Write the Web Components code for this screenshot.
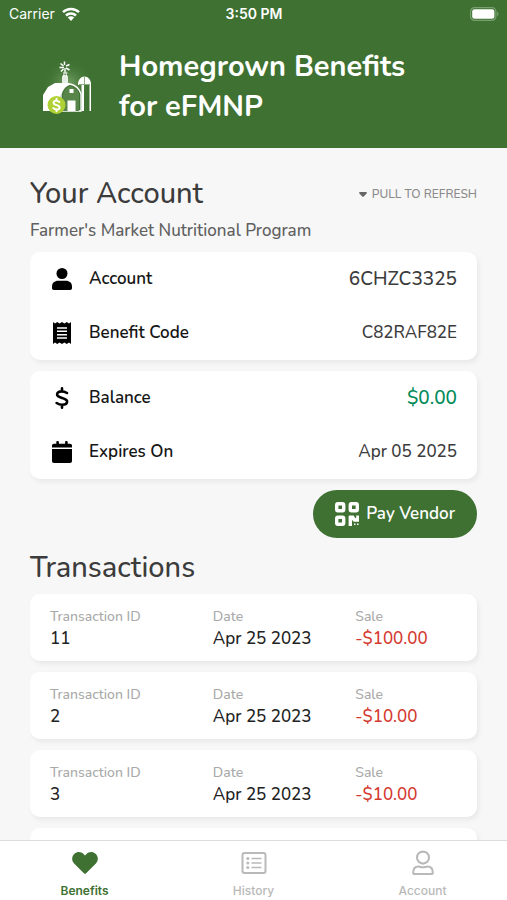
<!DOCTYPE html>
<html lang="en">
<head>
<meta charset="utf-8">
<meta name="viewport" content="width=device-width, initial-scale=1">
<title>Homegrown Benefits</title>
<style>
  :root {
    --green: #3e7132;
    --ink: #3c3c3c;
    --muted: #a9a9a9;
    --round: Nunito, Lato, "Noto Sans", sans-serif;
    --system: Inter, "Liberation Sans", sans-serif;
  }
  body { margin: 0; font-family: var(--round); background: #f7f7f7; }
</style>
</head>
<body>
<benefits-app></benefits-app>
<script>
const icons = {
  user: '<svg viewBox="0 0 20 22"><circle cx="10" cy="5.5" r="5.5"/><path d="M0 20v-1.500C0 15 2.700 12.800 6 12.800h8c3.300 0 6 2.200 6 5.700V20c0 1.200-.7 2-1.800 2H1.800C.7 22 0 21.200 0 20z"/></svg>',
  receipt: '<svg viewBox="0 0 20 22"><path fill-rule="evenodd" d="M1 0l2 1.600L5.200 0l2.400 1.600L10 0l2.400 1.600L14.800 0 17 1.600 19 0v22l-2-1.600-2.200 1.600-2.400-1.600L10 22l-2.400-1.600L5.200 22 3 20.400 1 22zM5 5.300v1.500h10V5.300zm0 3.300v1.500h10V8.600zm0 3.300v1.500h10v-1.500zm0 3.300v1.500h10v-1.500z"/></svg>',
  dollar: '<svg viewBox="0 0 20 22"><path fill="none" stroke="currentColor" stroke-width="2.600" stroke-linecap="round" stroke-linejoin="round" d="M10 1.300v3M10 17.700v3M15 6c-1.700-1-3.300-1.600-5.200-1.600C7 4.400 5.100 5.500 5.100 7.500c0 4.200 10 2.600 10 7 0 2-1.900 3.200-4.900 3.200-2.100 0-4-.7-5.600-1.700"/></svg>',
  calendar: '<svg viewBox="0 0 20 22"><path d="M0 6.500V4.700c0-1.200.8-2 2-2h2.300V1.200C4.300.5 4.800 0 5.600 0s1.300.5 1.300 1.200v1.500h6.200V1.200c0-.7.500-1.200 1.300-1.200s1.300.5 1.300 1.200v1.500H18c1.200 0 2 .8 2 2v1.800zM0 8h20v12c0 1.200-.8 2-2 2H2c-1.200 0-2-.8-2-2z"/></svg>',
  qr: '<svg viewBox="0 0 24 24"><g fill="none" stroke="currentColor" stroke-width="3.400" stroke-linejoin="round"><rect x="1.700" y="1.700" width="7" height="7" rx="1.200"/><rect x="15.300" y="1.700" width="7" height="7" rx="1.200"/><rect x="1.700" y="15.300" width="7" height="7" rx="1.200"/></g><path d="M13.600 14.600c0-.6.400-1 1-1h4l1.600 2.400h1v-2.400H24v6.200h-5.400L17 17.800V24h-3.400zM19 21.500h1.500V23H19zM22 21.500h1.500V23H22z"/></svg>',
  heart: '<svg viewBox="0 0 26 24"><path d="M23.500 2.800c-2.700-2.500-6.500-2.200-9 .2L13 4.600 11.500 3C9 .6 5.200.3 2.500 2.800c-3 2.700-3 7-.4 9.600l9.800 9.800c.6.700 1.600.7 2.200 0l9.800-9.800c2.600-2.600 2.600-6.900-.4-9.600z"/></svg>',
  list: '<svg viewBox="0 0 26 24"><g fill="none" stroke="currentColor" stroke-width="2"><rect x="1.500" y="2" width="23" height="20" rx="2"/><path stroke-width="1.600" d="M10.500 7.500h10M10.500 12h10M10.500 16.500h10"/></g><circle cx="6.800" cy="7.500" r="1.500"/><circle cx="6.800" cy="12" r="1.500"/><circle cx="6.800" cy="16.500" r="1.500"/></svg>',
  person: '<svg viewBox="0 0 26 24"><g fill="none" stroke="currentColor" stroke-width="2.100"><circle cx="13" cy="6.600" r="6"/><path d="M3.200 21.500c0-4 2.300-6 5.400-6 1.700 0 2.500.8 4.400.8s2.700-.8 4.400-.8c3.100 0 5.400 2 5.400 6 0 .9-.6 1.500-1.500 1.500H4.700c-.9 0-1.500-.6-1.500-1.500z"/></g></svg>'
};

function define(name, markup) {
  customElements.define(name, class extends HTMLElement {
    connectedCallback() {
      if (this.shadowRoot) return;
      const html = typeof markup === 'function' ? markup(this) : markup;
      this.attachShadow({ mode: 'open' }).innerHTML = html;
    }
  });
}

define('app-icon', el => `
  <style>
    :host { display: block; flex: none; width: 20px; height: 22px; }
    svg { display: block; width: 100%; height: 100%; fill: currentColor; overflow: visible; }
  </style>${icons[el.getAttribute('name')]}`);

define('status-bar', `
  <style>
    :host { display: grid; grid-template-columns: 1fr auto 1fr; align-items: center; height: 27px; padding: 0 8px 0 9px;
      font: 500 14px/20px var(--system); color: #fff; }
    .left { display: flex; align-items: center; gap: 7px; font-weight: 400; }
    .time { font-weight: 600; }
    svg { display: block; }
    .battery { justify-self: end; }
  </style>
  <span class="left">Carrier
    <svg width="18" height="14" viewBox="0 0 18 14" fill="none" stroke="#fff" stroke-width="2.500"><path d="M1 5.200a11.500 11.500 0 0 1 16 0M4 8.500a7.200 7.200 0 0 1 10 0"/><path fill="#fff" stroke="none" d="M9 14l-3.200-3.400a4.600 4.600 0 0 1 6.400 0z"/></svg>
  </span>
  <span class="time">3:50 PM</span>
  <svg class="battery" width="29" height="14" viewBox="0 0 29 14"><rect x=".6" y=".6" width="25.300" height="12.800" rx="4" fill="none" stroke="#79a06f" stroke-width="1.200"/><rect x="2.200" y="2.200" width="22.200" height="9.600" rx="2.300" fill="#fff"/><path d="M27.200 4.800c1.700.6 1.700 3.800 0 4.400z" fill="#79a06f"/></svg>`);

define('farm-logo', `
  <style>:host { display: block; flex: none; width: 60px; height: 60px; } svg { display: block; }</style>
  <svg width="60" height="60" viewBox="0 0 60 60">
    <defs><radialGradient id="glow"><stop offset="0" stop-color="#8fba7d" stop-opacity=".7"/><stop offset="1" stop-color="#3e7132" stop-opacity="0"/></radialGradient></defs>
    <circle cx="29" cy="27" r="26" fill="url(#glow)"/>
    <path fill="#fff" d="M4 54V38l5-8 7-4h15l-7 6-3 8v14z"/>
    <path fill="#fff" opacity=".85" d="M23 26v-6l1-2h4l1 2v6z"/>
    <path stroke="#fff" stroke-width="1" fill="none" opacity=".8" d="M24.500 20L26 11M27.800 20L26 11M24 16h4.500"/>
    <path stroke="#fff" stroke-width="1.500" fill="none" d="M25.500 4.500v3.500M20.500 10.500H25M27 9l3.500-1.500M27 11l3.500 2M24.500 12l-2.500 2.500M21.500 6.500l3 2.500"/>
    <path fill="#3e7132" stroke="#fff" stroke-width="1.300" d="M22 54V37c2-6 5-9 9-10 5 1 9 4 11 10v17z"/>
    <path fill="#58864a" d="M24 37c2-5 4-7 7-8 4 1 7 3 9 8v17H24z"/>
    <path fill="#fff" d="M30.500 32h4v4h-4zM28.500 43.500h8V54h-8z"/>
    <path fill="#fff" d="M39 27c0-4 3-7.500 6.500-7.500S52 23 52 27v1H39z"/>
    <path fill="#fff" d="M42.500 28H45v26h-2.500zM50.500 27H52v27h-1.500z"/>
    <path fill="none" stroke="#8daf80" stroke-width="1" d="M40 27.500h11M45.500 19.500V27"/>
    <circle cx="17.500" cy="48" r="9" fill="#b0d136"/>
    <path fill="none" stroke="#fff" stroke-width="2" stroke-linecap="round" d="M17.500 41.800v1.600M17.500 52.600v1.600M20.300 45c-2-2-5.700-1.500-5.700.8 0 3 6 1.600 6 4.700 0 2.400-4.200 2.800-6.200.6"/>
  </svg>`);

define('app-header', `
  <style>
    :host { display: block; flex: none; background: var(--green); color: #fff; padding-bottom: 21px; }
    .brand { display: flex; align-items: center; gap: 20px; padding: 20px 30px 0 39px; }
    h1 { margin: 0; font-size: 29px; line-height: 40px; font-weight: 700; max-width: 300px; }
  </style>
  <status-bar></status-bar>
  <div class="brand"><farm-logo></farm-logo><h1><slot></slot></h1></div>`);

define('info-card', `
  <style>
    :host { display: block; background: #fff; border-radius: 10px; box-shadow: 2px 3px 5px rgba(0,0,0,.06); }
  </style><slot></slot>`);

define('info-row', el => `
  <style>
    :host { display: flex; align-items: center; gap: 17px; height: 54px; padding: 0 20px 0 22px; font-size: 17px; line-height: 24px; }
    .label { flex: 1; font-weight: 600; color: #161616; }
    .value { color: var(--ink); font-weight: 500; }
    :host([large]) .value { font-size: 19px; }
    :host([good]) .value { color: #008a57; }
  </style>
  <app-icon name="${el.getAttribute('icon')}"></app-icon>
  <span class="label">${el.getAttribute('label')}</span><span class="value"><slot></slot></span>`);

define('transaction-card', el => `
  <style>
    :host { display: block; min-height: 67px; background: #fff; border-radius: 10px; box-shadow: 2px 3px 5px rgba(0,0,0,.06); }
    dl { display: grid; grid-template-columns: 8fr 7fr 5fr; margin: 0; padding: 13px 20px 11px; }
    dt { font-size: 14px; line-height: 20px; font-weight: 500; color: var(--muted); }
    dd { margin: 0; font-size: 17px; line-height: 23px; font-weight: 500; color: #222; white-space: nowrap; }
    .sale { color: #d4392f; }
  </style>
  ${el.hasAttribute('number') ? `<dl>
    <div><dt>Transaction ID</dt><dd>${el.getAttribute('number')}</dd></div>
    <div><dt>Date</dt><dd>${el.getAttribute('date')}</dd></div>
    <div><dt>Sale</dt><dd class="sale">${el.getAttribute('sale')}</dd></div>
  </dl>` : ''}`);

define('pay-button', `
  <style>
    :host { display: block; }
    button { display: flex; align-items: center; gap: 7px; height: 48px; padding: 0 22px; border: 0; border-radius: 24px;
      background: var(--green); color: #fff; font: 600 17px/24px var(--round); cursor: pointer; }
    app-icon { width: 24px; height: 24px; }
  </style>
  <button type="button"><app-icon name="qr"></app-icon><slot></slot></button>`);

define('refresh-hint', `
  <style>
    :host { display: flex; align-items: center; gap: 5px; font-size: 12px; line-height: 20px; font-weight: 500; color: #8a8a8a; }
    svg { display: block; fill: #666; }
  </style>
  <svg width="8" height="5" viewBox="0 0 8 5"><path d="M1 0h6c.9 0 1.200.9.600 1.500L4.700 4.600c-.4.400-1 .4-1.400 0L.4 1.500C-.2.9.1 0 1 0z"/></svg><slot></slot>`);

define('tab-item', el => `
  <style>
    :host { display: block; flex: 1; }
    a { display: flex; flex-direction: column; align-items: center; gap: 8px; padding-top: 10px; color: #b9b9b9; text-decoration: none;
      font: 500 12px/16px var(--system); }
    a[aria-current] { color: var(--green); font-weight: 600; }
    app-icon { width: 26px; height: 24px; }
  </style>
  <a href="#" ${el.hasAttribute('current') ? 'aria-current="page"' : ''}><app-icon name="${el.getAttribute('icon')}"></app-icon><slot></slot></a>`);

define('tab-bar', `
  <style>:host { display: flex; flex: none; height: 59px; border-top: 1px solid #dcdcdc; background: #fff; }</style><slot></slot>`);

define('benefits-app', `
  <style>
    :host { display: flex; flex-direction: column; height: 100vh; }
    main { flex: 1; min-height: 0; overflow-y: auto; scrollbar-width: none; padding: 26px 30px 0; box-sizing: border-box; }
    .heading { display: flex; justify-content: space-between; align-items: center; }
    h2 { margin: 0; font-size: 29px; line-height: 40px; font-weight: 500; color: var(--ink); }
    p { margin: 5px 0 9px; font-size: 17px; line-height: 24px; font-weight: 500; color: #606060; }
    .stack { display: grid; gap: 11px; }
    pay-button { justify-self: end; }
    h2.second { margin: 10px 0 6px; }
  </style>
  <app-header>Homegrown Benefits for eFMNP</app-header>
  <main>
    <div class="heading"><h2>Your Account</h2><refresh-hint>PULL TO REFRESH</refresh-hint></div>
    <p>Farmer's Market Nutritional Program</p>
    <div class="stack">
      <info-card>
        <info-row icon="user" label="Account" large>6CHZC3325</info-row>
        <info-row icon="receipt" label="Benefit Code">C82RAF82E</info-row>
      </info-card>
      <info-card>
        <info-row icon="dollar" label="Balance" large good>$0.00</info-row>
        <info-row icon="calendar" label="Expires On">Apr 05 2025</info-row>
      </info-card>
      <pay-button>Pay Vendor</pay-button>
    </div>
    <h2 class="second">Transactions</h2>
    <div class="stack">
      <transaction-card number="11" date="Apr 25 2023" sale="-$100.00"></transaction-card>
      <transaction-card number="2" date="Apr 25 2023" sale="-$10.00"></transaction-card>
      <transaction-card number="3" date="Apr 25 2023" sale="-$10.00"></transaction-card>
      <transaction-card></transaction-card>
    </div>
  </main>
  <tab-bar>
    <tab-item icon="heart" current>Benefits</tab-item>
    <tab-item icon="list">History</tab-item>
    <tab-item icon="person">Account</tab-item>
  </tab-bar>`);
</script>
</body>
</html>
